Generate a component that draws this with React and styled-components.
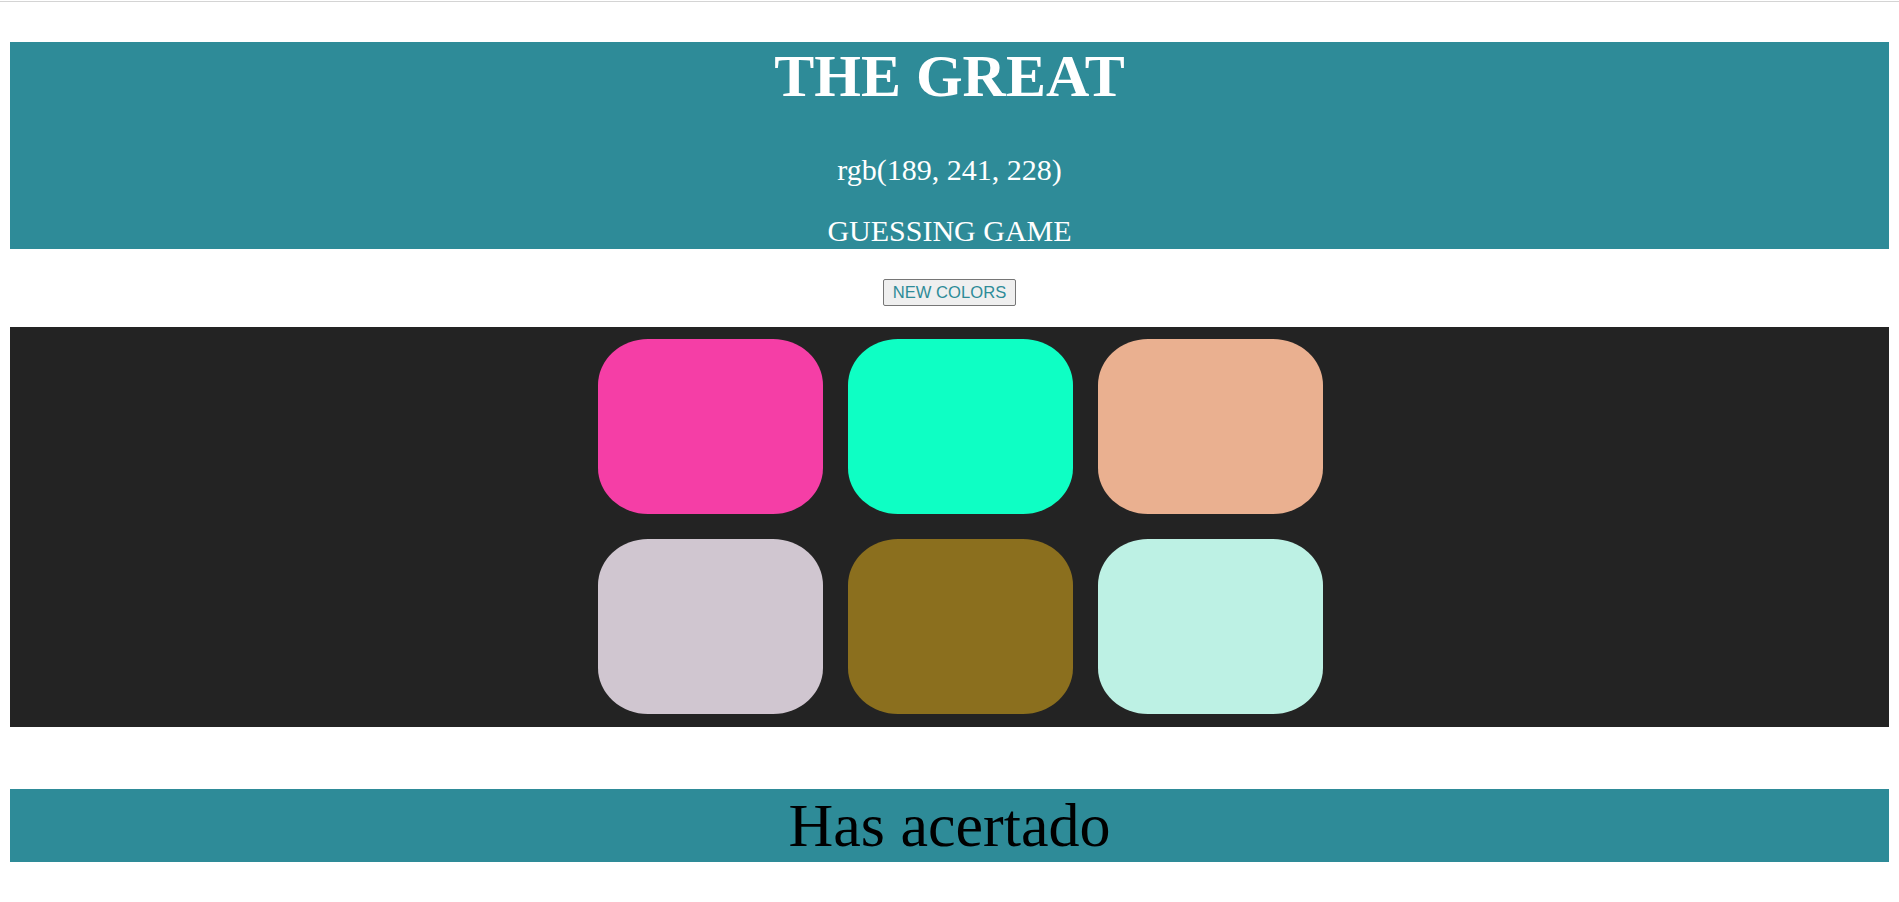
import styled, { createGlobalStyle } from "styled-components"

const TEAL = "#2e8b98"

const tiles = [
  "rgb(245, 62, 166)",
  "rgb(14, 255, 196)",
  "rgb(234, 176, 144)",
  "rgb(208, 198, 208)",
  "rgb(139, 111, 30)",
  "rgb(189, 241, 228)",
]

const GlobalStyle = createGlobalStyle`
  html, body {
    margin: 0;
    padding: 0;
    background: #ffffff;
  }

  body {
    font-family: "Liberation Serif", "Times New Roman", serif;
  }
`

const Page = styled.div`
  padding: 0 10px;
`

const TopLine = styled.div`
  height: 1px;
  margin: 1px -10px 0;
  background: #d4d4d4;
`

const Header = styled.header`
  margin-top: 40px;
  padding-bottom: 1px;
  background: ${TEAL};
  color: #ffffff;
  text-align: center;
`

const Title = styled.h1`
  margin: 0;
  font-size: 60px;
  line-height: 69px;
  font-weight: 700;
`

const SubTitle = styled.h2`
  margin: ${p => p.$gap}px 0 0;
  font-size: 30px;
  line-height: 34px;
  font-weight: 400;
`

const ButtonRow = styled.div`
  display: flex;
  justify-content: center;
  padding: 30px 0 21px;
`

const NewColors = styled.button`
  height: 27px;
  padding: 0 9px;
  border: 1px solid #767676;
  border-radius: 2px;
  background: #efefef;
  color: ${TEAL};
  font-family: "Liberation Sans", Arial, sans-serif;
  font-size: 16.6px;
  cursor: pointer;
`

const Board = styled.section`
  background: #232323;
  padding: 12px 0 13px;
`

const Grid = styled.div`
  width: 750px;
  margin: 0 auto;
  padding-left: 23px;
  box-sizing: border-box;
  display: grid;
  grid-template-columns: repeat(3, 225px);
  grid-auto-rows: 175px;
  gap: 25px;
`

const Tile = styled.div`
  background: ${p => p.$color};
  border-radius: 50px / 46px;
  cursor: pointer;
`

const Message = styled.div`
  margin-top: 62px;
  height: 73px;
  line-height: 73px;
  background: ${TEAL};
  color: #000000;
  font-size: 62px;
  text-align: center;
`

const App = () => {

  return (
    <>
      <GlobalStyle />
      <Page>
        <TopLine />
        <Header>
          <Title>THE GREAT</Title>
          <SubTitle $gap={42}>rgb(189, 241, 228)</SubTitle>
          <SubTitle $gap={27}>GUESSING GAME</SubTitle>
        </Header>
        <ButtonRow>
          <NewColors>NEW COLORS</NewColors>
        </ButtonRow>
        <Board>
          <Grid>
            {tiles.map(color => <Tile $color={color} key={color} />)}
          </Grid>
        </Board>
        <Message>Has acertado</Message>
      </Page>
    </>
  )
}

export default App
